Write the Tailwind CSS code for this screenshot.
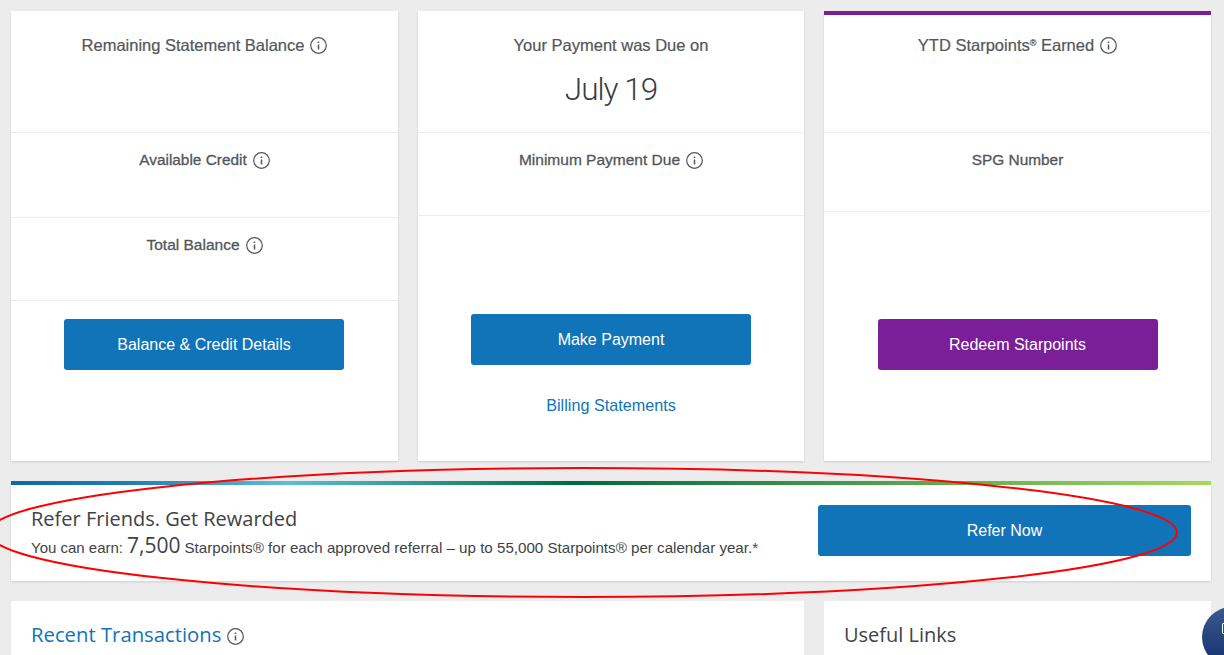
<!DOCTYPE html>
<html lang="en">
<head>
  <meta charset="UTF-8">
  <meta name="viewport" content="width=device-width, initial-scale=1.0">
  <title>Account Summary</title>
  <script src="https://cdn.jsdelivr.net/npm/@tailwindcss/browser@4"></script>
</head>
<body class="bg-[#ececec] text-[#53565a] font-['Liberation_Sans',Arial,sans-serif] h-[655px] overflow-hidden relative">
  <main class="pt-[11px] px-[11px] w-[1222px]">
    <!-- Summary cards -->
    <div class="flex gap-5 h-[450px]">
      <!-- Balance -->
      <section class="w-[387px] bg-white shadow-[0_1px_2px_rgba(0,0,0,0.12)] flex flex-col text-center">
        <div class="h-[122px] pt-6 border-b border-[#ececec] flex justify-center items-start gap-[6px] text-[16.5px] leading-5 [-webkit-text-stroke:0.2px]">
          <span>Remaining Statement Balance</span>
          <svg class="w-[17px] h-[17px] mt-[2px]" viewBox="0 0 17 17" fill="none" stroke="#53565a"><circle cx="8.5" cy="8.5" r="7.8" stroke-width="1.2"/><path d="M8.5 7.5v5M8.5 4.5v1.4" stroke-width="1.5"/></svg>
        </div>
        <div class="h-[85px] pt-[17px] border-b border-[#ececec] flex justify-center items-start gap-[6px] text-[15.4px] leading-5 [-webkit-text-stroke:0.3px]">
          <span>Available Credit</span>
          <svg class="w-[17px] h-[17px] mt-[2px]" viewBox="0 0 17 17" fill="none" stroke="#53565a"><circle cx="8.5" cy="8.5" r="7.8" stroke-width="1.2"/><path d="M8.5 7.5v5M8.5 4.5v1.4" stroke-width="1.5"/></svg>
        </div>
        <div class="h-[83px] pt-[17px] border-b border-[#ececec] flex justify-center items-start gap-[6px] text-[15.5px] leading-5 [-webkit-text-stroke:0.3px]">
          <span>Total Balance</span>
          <svg class="w-[17px] h-[17px] mt-[2px]" viewBox="0 0 17 17" fill="none" stroke="#53565a"><circle cx="8.5" cy="8.5" r="7.8" stroke-width="1.2"/><path d="M8.5 7.5v5M8.5 4.5v1.4" stroke-width="1.5"/></svg>
        </div>
        <div class="pt-[18px] pr-px flex justify-center">
          <a class="w-[280px] h-[51px] rounded-[3px] bg-[#1174b9] text-white text-[16px] flex items-center justify-center">Balance &amp; Credit Details</a>
        </div>
      </section>

      <!-- Payment -->
      <section class="w-[386px] bg-white shadow-[0_1px_2px_rgba(0,0,0,0.12)] flex flex-col text-center">
        <div class="h-[122px] pt-6 border-b border-[#ececec]">
          <div class="text-[16.5px] leading-5 [-webkit-text-stroke:0.2px]">Your Payment was Due on</div>
          <div class="mt-[17px] text-[31.5px] leading-9 tracking-[-1px] text-[#3a3d40] font-['Roboto',sans-serif] font-light">July 19</div>
        </div>
        <div class="h-[83px] pt-[17px] border-b border-[#ececec] flex justify-center items-start gap-[6px] text-[15.5px] leading-5 [-webkit-text-stroke:0.3px]">
          <span>Minimum Payment Due</span>
          <svg class="w-[17px] h-[17px] mt-[2px]" viewBox="0 0 17 17" fill="none" stroke="#53565a"><circle cx="8.5" cy="8.5" r="7.8" stroke-width="1.2"/><path d="M8.5 7.5v5M8.5 4.5v1.4" stroke-width="1.5"/></svg>
        </div>
        <div class="pt-[98px] flex flex-col items-center">
          <a class="w-[280px] h-[51px] rounded-[3px] bg-[#1174b9] text-white text-[16px] flex items-center justify-center">Make Payment</a>
          <a class="mt-[30px] text-[16.2px] leading-5 text-[#1174b9]">Billing Statements</a>
        </div>
      </section>

      <!-- Starpoints -->
      <section class="w-[387px] bg-white shadow-[0_1px_2px_rgba(0,0,0,0.12)] flex flex-col text-center border-t-4 border-[#7b1f98]">
        <div class="h-[118px] pt-5 border-b border-[#ececec] flex justify-center items-start gap-[6px] text-[16.5px] leading-5 [-webkit-text-stroke:0.2px]">
          <span>YTD Starpoints<sup class="text-[9px] -top-[5px]">®</sup> Earned</span>
          <svg class="w-[17px] h-[17px] mt-[2px]" viewBox="0 0 17 17" fill="none" stroke="#53565a"><circle cx="8.5" cy="8.5" r="7.8" stroke-width="1.2"/><path d="M8.5 7.5v5M8.5 4.5v1.4" stroke-width="1.5"/></svg>
        </div>
        <div class="h-[79px] pt-[17px] border-b border-[#ececec] text-[15.4px] leading-5 [-webkit-text-stroke:0.3px]">SPG Number</div>
        <div class="pt-[107px] flex justify-center">
          <a class="w-[280px] h-[51px] rounded-[3px] bg-[#7b1f98] text-white text-[16px] flex items-center justify-center">Redeem Starpoints</a>
        </div>
      </section>
    </div>

    <!-- Referral banner -->
    <section class="mt-5 h-[100px] bg-white shadow-[0_1px_2px_rgba(0,0,0,0.12)]">
      <div class="h-1 bg-[linear-gradient(to_right,#0b6b9e_0%,#1f7fb5_10%,#5fbcd6_23%,#006a3c_47%,#a5da5f_100%)]"></div>
      <div class="flex justify-between pl-5 pr-5 pt-5">
        <div class="text-[#404346]">
          <div class="text-[20px] leading-7 font-['Open_Sans',sans-serif]">Refer Friends. Get Rewarded</div>
          <div class="text-[15px] leading-6 flex items-baseline gap-1"><span>You can earn:</span><span class="text-[21px] font-['Open_Sans',sans-serif]">7,500</span><span class="text-[15.15px]">Starpoints® for each approved referral – up to 55,000 Starpoints® per calendar year.*</span></div>
        </div>
        <a class="w-[373px] h-[51px] rounded-[3px] bg-[#1174b9] text-white text-[16px] flex items-center justify-center">Refer Now</a>
      </div>
    </section>

    <!-- Bottom row -->
    <div class="mt-5 flex gap-5">
      <section class="w-[793px] h-[80px] bg-white pl-5 pt-[19px] flex items-start gap-[6px]">
        <h2 class="text-[20.3px] leading-7 text-[#1174b9] font-['Open_Sans',sans-serif]">Recent Transactions</h2>
        <svg class="w-[17px] h-[17px] mt-2" viewBox="0 0 17 17" fill="none" stroke="#53565a"><circle cx="8.5" cy="8.5" r="7.8" stroke-width="1.2"/><path d="M8.5 7.5v5M8.5 4.5v1.4" stroke-width="1.5"/></svg>
      </section>
      <section class="w-[387px] h-[80px] bg-white pl-5 pt-5">
        <h2 class="text-[20px] leading-7 text-[#404346] font-['Open_Sans',sans-serif]">Useful Links</h2>
      </section>
    </div>
  </main>

  <!-- Chat button -->
  <div class="absolute left-[1202px] top-[607px] w-[60px] h-[60px] rounded-full bg-[linear-gradient(to_bottom,#3a5a8c,#12306e)]">
    <div class="absolute left-[20px] top-[16px] w-[8px] h-[11px] border border-white rounded-[1px]"></div>
  </div>

  <!-- Red annotation -->
  <svg class="absolute left-0 top-0 pointer-events-none" width="1224" height="655" fill="none"><ellipse cx="582.8" cy="532.5" rx="594.2" ry="64.5" stroke="#ff0000" stroke-width="2"/></svg>
</body>
</html>
